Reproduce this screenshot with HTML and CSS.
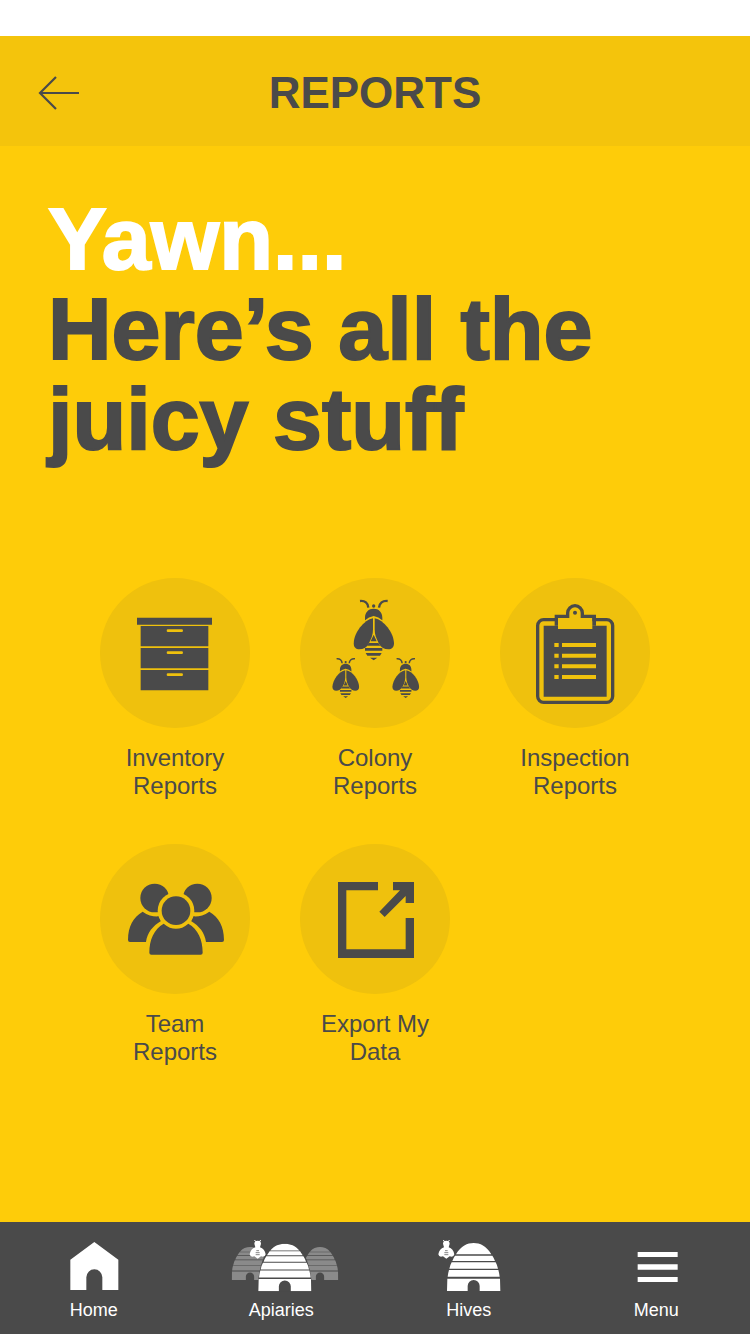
FILE: index.html
```html
<!DOCTYPE html>
<html lang="en">
<head>
<meta charset="utf-8">
<meta name="viewport" content="width=device-width, initial-scale=1">
<title>Reports</title>
<link rel="stylesheet" href="styles.css">
</head>
<body>
<svg class="defs" aria-hidden="true">
  <symbol id="bee" viewBox="100 28 122 184">
    <g fill="none" stroke="currentColor" stroke-width="7">
      <path d="M120 33C135 31 144 40 145 53M203 33C188 31 178 40 177 53"/>
    </g>
    <g fill="currentColor">
      <circle cx="161" cy="48" r="5"/>
      <path d="M135 91V83C135 66 146 56 161 56S187 66 187 83V91Q176 81 161 78Q146 81 135 91Z"/>
      <path d="M159 85C132 90 102 128 101 160C101 172 108 178 118 178C130 178 140 172 146 161C154 146 159 135 159 118Z"/>
      <path d="M164 85C191 90 221 128 222 160C222 172 215 178 205 178C193 178 183 172 177 161C169 146 164 135 164 118Z"/>
      <path d="M161 134L170 154H152ZM147 159H175L181 167H141ZM135 174H187V182H135ZM137 189H185L180 197H142ZM150 203H172L161 211Z"/>
    </g>
  </symbol>
  <symbol id="dome" viewBox="80 54 160 144">
    <path fill="currentColor" d="M116 75C127 60 145 54 160 54S193 60 204 75ZM114 77H206L214 89H106ZM104 92H216Q221 99 224 109H96Q99 99 104 92ZM94 112H226Q231 121 233 132H87Q89 121 94 112ZM86 135H234Q237 145 238 156H82Q83 145 86 135ZM81 161H239L240 198H178V183A18 18 0 0 0 142 183V198H80Z"/>
  </symbol>
  <symbol id="small-bee" viewBox="88 44 52 58">
    <g fill="currentColor">
      <path d="M104 46L110 50M124 46L118 50" stroke="currentColor" stroke-width="3"/>
      <path d="M104 56Q104 47 114 47T124 56L121 67Q135 72 138 88Q136 98 124 94L114 101L104 94Q92 98 90 88Q93 72 107 67Z"/>
    </g>
    <path class="line" d="M110 77H118M108 83H120M108 89H120"/>
  </symbol>
</svg>

<div class="screen">
  <div class="status"></div>
  <header class="topbar">
    <button class="back" type="button" aria-label="Back">
      <svg viewBox="0 0 42 34" width="42" height="34"><path d="M41 17H2M18 1L2 17L18 33" fill="none" stroke="currentColor" stroke-width="2.2"/></svg>
    </button>
    <h1 class="title">REPORTS</h1>
  </header>

  <main class="content">
    <h2 class="headline"><span class="light">Yawn...</span><br>Here’s all the<br>juicy stuff</h2>

    <div class="reports">
      <a class="report" href="#inventory">
        <svg class="disc" viewBox="30 24 450 450" fill="currentColor" aria-hidden="true">
          <path d="M141 143H366V164H141ZM152 168H355V229H152ZM152 234H355V295H152ZM152 300H355V361H152Z"/>
          <path class="cut" d="M234 182H275M234 248H275M234 314H275" stroke-width="8" stroke-linecap="round"/>
        </svg>
        <span>Inventory<br>Reports</span>
      </a>
      <a class="report" href="#colony">
        <svg class="disc" viewBox="-60 -36 450 450" aria-hidden="true">
          <use href="#bee" x="100" y="28" width="122" height="184"/>
          <use href="#bee" x="36" y="203" width="82" height="122"/>
          <use href="#bee" x="216" y="203" width="82" height="122"/>
        </svg>
        <span>Colony<br>Reports</span>
      </a>
      <a class="report" href="#inspection">
        <svg class="disc" viewBox="0 24 450 450" aria-hidden="true">
          <rect x="113" y="149" width="225" height="248" rx="18" fill="none" stroke="currentColor" stroke-width="10"/>
          <path fill="currentColor" d="M131 167H320V380H131Z"/>
          <path class="gap" d="M174 143H277V177H174Z"/>
          <path fill="currentColor" d="M164 167V134H198V129A27 27 0 0 1 252 129V134H288V167H277V144H242V129A17 17 0 0 0 208 129V144H174V167Z"/>
          <circle cx="225" cy="128" r="6" fill="currentColor"/>
          <path class="cut" d="M163 225H176M186 225H288M163 257H176M186 257H288M163 289H176M186 289H288M163 321H176M186 321H288" stroke-width="12"/>
        </svg>
        <span>Inspection<br>Reports</span>
      </a>
      <a class="report" href="#team">
        <svg class="disc" viewBox="30 12 450 450" fill="currentColor" aria-hidden="true">
          <path d="M114 300C114 258 130 232 158 215C175 227 193 231 207 229L213 243C188 258 172 278 168 306H120Q114 306 114 300Z"/>
          <path d="M402 300C402 258 386 232 358 215C341 227 323 231 309 229L303 243C328 258 344 278 348 306H396Q402 306 402 300Z"/>
          <circle cx="194" cy="174" r="43"/>
          <circle cx="322" cy="174" r="43"/>
          <circle class="gap" cx="258" cy="212" r="55"/>
          <circle cx="258" cy="212" r="43"/>
          <path d="M178 338C178 298 192 268 221 251Q258 282 295 251C324 268 338 298 338 338Q338 344 332 344H184Q178 344 178 338Z"/>
        </svg>
        <span>Team<br>Reports</span>
      </a>
      <a class="report" href="#export">
        <svg class="disc" viewBox="30 12 450 450" fill="currentColor" aria-hidden="true">
          <path d="M144 126H264V151H169V328H347V234H372V354H144Z"/>
          <path d="M309 126H372V189H347V168L284 231L268 215L330 151H309Z"/>
        </svg>
        <span>Export My<br>Data</span>
      </a>
    </div>
  </main>

  <nav class="tabs">
    <a class="tab" href="#home">
      <svg viewBox="-19 75 360 156" width="120" height="52" aria-hidden="true"><path fill="currentColor" d="M90 134L162 81L234 134V225H186V187A24 24 0 0 0 138 187V225H90Z"/></svg>
      <span>Home</span>
    </a>
    <a class="tab" href="#apiaries">
      <svg viewBox="4 45 360 156" width="120" height="52" aria-hidden="true">
        <g class="far">
          <use href="#dome" x="36" y="66" width="110" height="99"/>
          <use href="#dome" x="246" y="66" width="110" height="99"/>
        </g>
        <path class="shade" d="M113 199C115 150 124 105 143 78C155 60 180 53 195 53S235 60 247 78C267 105 276 150 278 199Z"/>
        <use href="#dome" x="115" y="56" width="161" height="143"/>
        <use href="#small-bee" x="88" y="44" width="52" height="58"/>
      </svg>
      <span>Apiaries</span>
    </a>
    <a class="tab" href="#hives">
      <svg viewBox="-34 45 360 156" width="120" height="52" aria-hidden="true">
        <path fill="currentColor" d="M107 88C122 62 141 54 160 54S198 62 213 88ZM104 92H216Q221 99 224 108H96Q99 99 104 92ZM94 112H226Q231 121 233 131H87Q89 121 94 112ZM86 135H234Q237 145 238 155H82Q83 145 86 135ZM81 161H239L240 198H178V183A18 18 0 0 0 142 183V198H80Z"/>
        <use href="#small-bee" x="52" y="44" width="52" height="58"/>
      </svg>
      <span>Hives</span>
    </a>
    <a class="tab" href="#menu">
      <svg viewBox="-11 75 360 156" width="120" height="52" aria-hidden="true"><path fill="currentColor" d="M114 111H234V126H114ZM114 148H234V164H114ZM114 186H234V201H114Z"/></svg>
      <span>Menu</span>
    </a>
  </nav>
</div>
</body>
</html>
```
FILE: styles.css
```css
:root {
  --ink: #4a4a4a;
  --yellow: #fecc09;
  --disc: #efc10d;
}

* { box-sizing: border-box; }

body {
  margin: 0;
  background: var(--yellow);
  color: var(--ink);
  font-family: "Liberation Sans", Arial, sans-serif;
}

a { color: inherit; text-decoration: none; }

.defs { display: none; }

.screen {
  display: flex;
  flex-direction: column;
  min-height: 100vh;
}

.status { height: 36px; background: #fff; }

.topbar {
  display: grid;
  grid-template-columns: 1fr auto 1fr;
  align-items: center;
  padding: 31px 38px 27px;
  background: #f4c40c;
}

.back {
  justify-self: start;
  display: flex;
  padding: 0;
  border: 0;
  background: none;
  color: inherit;
}

.title {
  margin: 0;
  font-size: 44px;
  line-height: 52px;
}

.content { flex: 1; padding: 48px 0; }

.headline {
  margin: 0 0 114px;
  padding: 0 48px;
  font-size: 88px;
  line-height: 90px;
  -webkit-text-stroke: 2px currentColor;
}

.light { color: #fff; }

.reports {
  display: grid;
  grid-template-columns: repeat(3, 1fr);
  row-gap: 44px;
  padding: 0 10%;
}

.report {
  display: flex;
  flex-direction: column;
  align-items: center;
  gap: 16px;
  font-size: 24px;
  line-height: 28px;
  text-align: center;
}

.disc {
  width: 150px;
  height: 150px;
  border-radius: 50%;
  background: var(--disc);
}

.cut { stroke: var(--disc); }
.gap { fill: var(--disc); }

.tabs {
  display: grid;
  grid-template-columns: repeat(4, 1fr);
  padding: 18px 0 12px;
  background: var(--ink);
  color: #fff;
}

.tab {
  display: flex;
  flex-direction: column;
  align-items: center;
  gap: 6px;
  font-size: 18px;
  line-height: 24px;
}

.far { color: #8a8a8a; }
.shade { fill: var(--ink); }
.line { stroke: var(--ink); stroke-width: 2; }
```
